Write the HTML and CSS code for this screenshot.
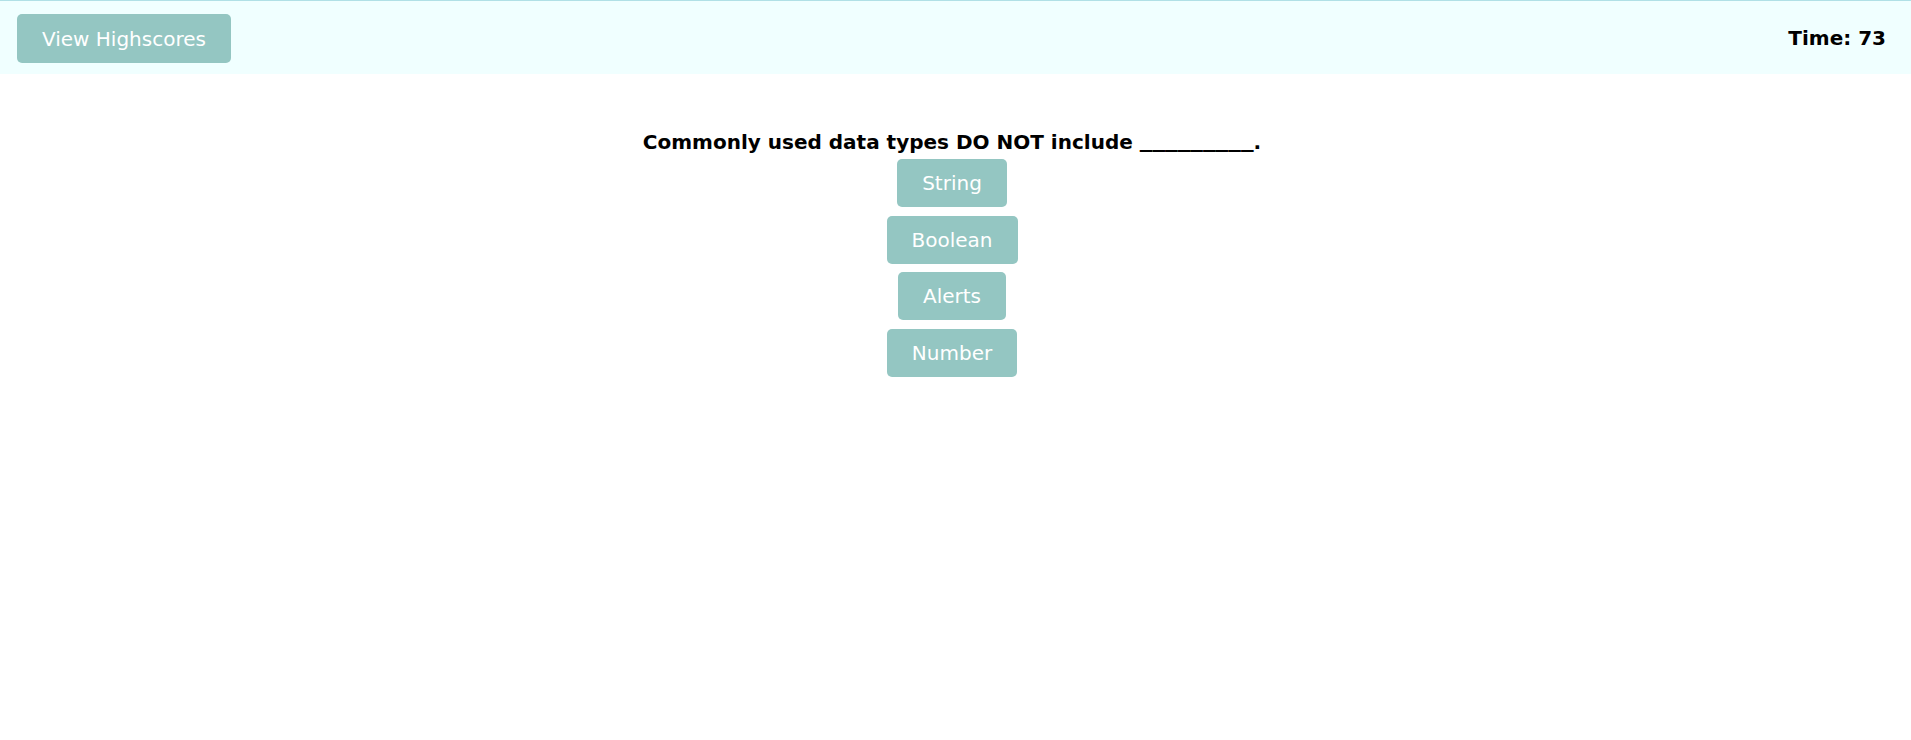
FILE: index.html
```html
<!DOCTYPE html>
<html lang="en">
<head>
<meta charset="utf-8">
<title>Code Quiz</title>
<link rel="stylesheet" href="styles.css">
</head>
<body>
<header class="topbar">
  <button class="btn btn-scores">View Highscores</button>
  <div class="timer">Time: 73</div>
</header>
<main class="quiz">
  <h3 class="question">Commonly used data types DO NOT include <span class="blank">_________</span>.</h3>
  <div class="choices">
    <button class="btn">String</button>
    <button class="btn">Boolean</button>
    <button class="btn">Alerts</button>
    <button class="btn">Number</button>
  </div>
</main>
</body>
</html>
```
FILE: styles.css
```css
* { box-sizing: border-box; }
html, body {
  margin: 0;
  padding: 0;
  background: #ffffff;
  font-family: "DejaVu Sans", Verdana, sans-serif;
}
.topbar {
  display: flex;
  align-items: center;
  justify-content: space-between;
  height: 74px;
  padding: 0 25px 0 17px;
  background: #f0ffff;
  border-top: 1px solid #b0e0e6;
}
.btn {
  font-family: "DejaVu Sans", Verdana, sans-serif;
  font-size: 20px;
  line-height: 24px;
  padding: 12px 25px;
  border: none;
  border-radius: 5px;
  background: #94c6c2;
  color: #ffffff;
  cursor: pointer;
}
.btn-scores {
  height: 49px;
  margin-top: 2px;
}
.timer {
  font-size: 20px;
  font-weight: bold;
  color: #000;
}
.quiz {
  display: flex;
  flex-direction: column;
  align-items: center;
  padding-right: 7px;
}
.question {
  margin: 57px 0 5px;
  height: 23px;
  font-size: 20px;
  line-height: 23px;
  font-weight: bold;
  color: #000;
}
.blank {
  font-family: "DejaVu Sans Mono", "Liberation Mono", monospace;
  font-size: 21px;
  line-height: 20px;
  position: relative;
  top: -2px;
}
.choices {
  display: flex;
  flex-direction: column;
  align-items: center;
  gap: 8.5px;
}
.choices .btn {
  height: 48px;
}
```
